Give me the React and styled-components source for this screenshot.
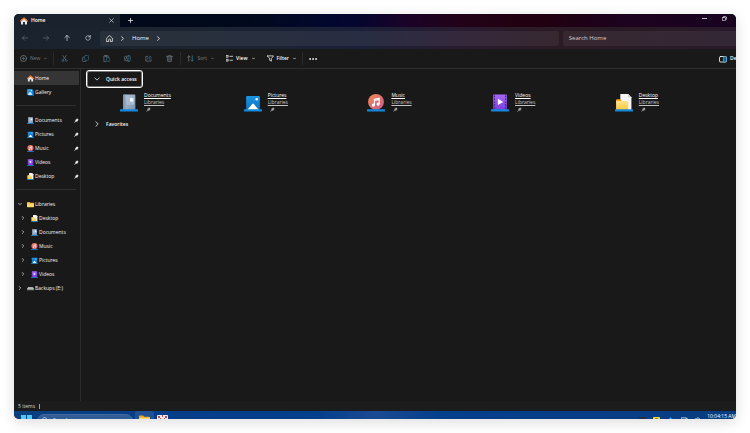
import React, { useState } from 'react';
import styled, { createGlobalStyle } from 'styled-components';

const GlobalStyle = createGlobalStyle`
  * {
    box-sizing: border-box;
  }

  body {
    margin: 0;
    background: #fff;
    font-family: "Open Sans", "Noto Sans", sans-serif;
    font-size: 5px;
    line-height: 7px;
    color: #f4f4f4;
  }

  button, input {
    font: inherit;
    color: inherit;
    background: none;
    border: none;
    margin: 0;
    padding: 0;
  }

  a {
    color: inherit;
    text-decoration: none;
  }

  svg {
    display: block;
    flex: none;
  }
`;

const Page = styled.div`
  min-height: 100vh;
  padding: 14px;
  display: flex;
`;

const Window = styled.div`
  flex: 1;
  min-width: 0;
  display: flex;
  flex-direction: column;
  overflow: hidden;
  border-radius: 5px;
  background: #191919;
  box-shadow: 0 3px 14px rgba(0, 0, 0, 0.14);
`;

const TitleBar = styled.header`
  height: 13px;
  display: flex;
  align-items: center;
  background: linear-gradient(90deg, #01091a 14%, #010a1c 32%, #02072f 44%, #05052e 48%, #1a0328 54%, #220218 62%, #21000f 72%, #1c0320 86%, #18021f 100%);
`;

const Tab = styled.div`
  width: 106px;
  height: 13px;
  padding: 0 6px;
  display: flex;
  align-items: center;
  gap: 3px;
  background: #1a232d;
  font-weight: 600;
  color: #fff;
`;

const TabLabel = styled.span`
  flex: 1;
`;

const IconButton = styled.button`
  width: ${props => props.$width || 20}px;
  height: 12px;
  display: flex;
  align-items: center;
  justify-content: center;
  color: ${props => (props.$dim ? '#6a737b' : '#e6e9ec')};
`;

const WindowControls = styled.div`
  margin-left: auto;
  padding-right: 2px;
  height: 9px;
  align-self: flex-start;
  display: flex;
  align-items: center;
`;

const AddressRow = styled.div`
  height: 22px;
  display: flex;
  align-items: center;
  background: linear-gradient(90deg, #1a232d 0%, #1b2430 25%, #1b2038 48%, #291b30 62%, #2b1b24 75%, #281a2a 100%);
`;

const NavButtons = styled.nav`
  display: flex;
  padding: 0 2px 0 0;
`;

const AddressBar = styled.div`
  flex: 1;
  height: 15px;
  padding: 0 6px;
  display: flex;
  align-items: center;
  gap: 7px;
  border-radius: 2px;
  background: rgba(255, 255, 255, 0.06);
  font-size: 6px;
  line-height: 8px;
  color: #f8f8f8;
`;

const SearchBox = styled.input`
  width: 24%;
  height: 15px;
  margin-left: 4px;
  padding: 0 6px;
  border-radius: 2px 0 0 2px;
  background: rgba(255, 255, 255, 0.06);
  font-size: 6px;
  line-height: 8px;
  outline: none;

  &::placeholder {
    color: #d6d0d6;
    opacity: 1;
  }
`;

const CommandBar = styled.div`
  height: 20px;
  display: flex;
  align-items: center;
  border-bottom: 1px solid #2d2d2d;
`;

const Command = styled.button`
  height: 14px;
  padding: 0 6px;
  display: flex;
  align-items: center;
  gap: 3px;
  font-weight: ${props => (props.$dim ? 400 : 600)};
  color: ${props => (props.$dim ? '#7c7c7c' : '#f8f8f8')};

  svg + span {
    margin-right: 1px;
  }
`;

const DetailsCommand = styled(Command)`
  flex: 0 0 17px;
  margin-left: auto;
  padding: 0;
  overflow: hidden;
`;

const Separator = styled.span`
  width: 1px;
  height: 13px;
  background: #2a2a2a;
`;

const Body = styled.div`
  flex: 1;
  display: flex;
`;

const Sidebar = styled.nav`
  width: 67px;
  padding-top: 2px;
  border-right: 1px solid #2b2b2b;
`;

const SideItem = styled.a`
  height: 14px;
  padding-left: ${props => (props.$nested ? 7 : 4)}px;
  margin-right: 1px;
  display: flex;
  align-items: center;
  background: ${props => (props.$active ? '#353535' : 'transparent')};
`;

const Caret = styled.span`
  width: ${props => (props.$nested ? 10 : 9)}px;
  color: #f0f0f0;
`;

const SideLabel = styled.span`
  flex: 1;
  padding-left: 1px;
  white-space: nowrap;
`;

const SideDivider = styled.hr`
  height: 1px;
  margin: 6px 4px 7px 2px;
  border: none;
  background: #303030;
`;

const Content = styled.main`
  flex: 1;
  padding: 1px 0 0 5px;
`;

const GroupHeader = styled.button`
  height: 18px;
  padding: 0 5px 0 7px;
  display: flex;
  align-items: center;
  gap: 6px;
  border: 1px solid ${props => (props.$focused ? '#fff' : 'transparent')};
  box-shadow: inset 0 0 0 1px ${props => (props.$focused ? '#777' : 'transparent')};
  border-radius: 3px;
  font-weight: 600;
  color: #f8f8f8;
`;

const TileGrid = styled.div`
  display: grid;
  grid-template-columns: repeat(4, 1fr) auto;
  padding: 4px 77px 2px 34px;
`;

const Tile = styled.a`
  display: flex;
  align-items: center;
  gap: 6px;
`;

const TileText = styled.span`
  display: flex;
  flex-direction: column;
`;

const TileName = styled.span`
  text-decoration: underline;
  color: #fff;
`;

const TilePlace = styled.span`
  text-decoration: underline;
  color: #c4c4c4;
`;

const TilePin = styled.span`
  padding: 1px 0 1px 2px;
  color: #a8a8a8;
`;

const StatusBar = styled.footer`
  height: 10px;
  padding: 0 4px;
  display: flex;
  align-items: center;
  gap: 4px;
  background: #1c1c1c;
  color: #d8d8d8;
`;

const StatusMark = styled.span`
  width: 1px;
  height: 5px;
  background: #a0a0a0;
`;

const Taskbar = styled.div`
  height: 8px;
  padding-left: 7px;
  display: flex;
  align-items: flex-start;
  overflow: hidden;
  background: linear-gradient(90deg, #0b3f80 0%, #053d88 20%, #043f8c 42%, #1a4a92 50%, #043f8c 59%, #063d86 80%, #083c80 100%);
`;

const TaskButton = styled.button`
  padding: ${props => (props.$active ? '3px 4px 0' : '4px 0 0')};
  margin-right: ${props => (props.$active ? 3 : 5)}px;
  border-radius: 2px;
  background: ${props => (props.$active ? 'rgba(255, 255, 255, 0.1)' : 'none')};
`;

const TaskSearch = styled.button`
  width: 96px;
  height: 14px;
  margin: 3px 2px 0 0;
  padding: 2px 4px;
  display: flex;
  gap: 5px;
  border-radius: 7px;
  background: #315d96;
  border: 1px solid #416a9f;
  color: #e8eef6;
`;

const Tray = styled.div`
  margin-left: auto;
  display: flex;
  gap: 7px;
  padding-top: 6px;
`;

const Clock = styled.time`
  padding: 2px 0 0 6px;
  white-space: nowrap;
  color: #fff;
`;

const Glyph = ({ size = 7, children, width = 1, ...rest }) => (
    <svg
        width={size}
        height={size}
        viewBox="0 0 16 16"
        fill="none"
        stroke="currentColor"
        strokeWidth={width * 1.7}
        strokeLinecap="round"
        strokeLinejoin="round"
        aria-hidden="true"
        {...rest}
    >
        {children}
    </svg>
);

const ChevronDown = ({ size = 5, width = 1.5 }) => <Glyph size={size} width={width}><path d="M2 5l6 6 6-6" /></Glyph>;
const ChevronRight = ({ size = 5, width = 1.5 }) => <Glyph size={size} width={width}><path d="M5 2l6 6-6 6" /></Glyph>;
const SmallChevron = () => <Glyph size={3} width={2}><path d="M2 5l6 6 6-6" /></Glyph>;

const Pin = ({ size = 5 }) => (
    <svg width={size} height={size} viewBox="0 0 16 16" aria-hidden="true">
        <path d="M9.5 1l5.5 5.5-2 1-2.5 2.5-.5 3.5-3-3L2 15.500.5 14l5-5-3-3L6 5.500 8.500 3z" fill="currentColor" />
    </svg>
);

const HomeIcon = ({ size = 7 }) => (
    <svg width={size} height={size} viewBox="0 0 16 16" aria-hidden="true">
        <path d="M2 6L8 2l6 4v9H9.800v-5H6.200v5H2z" fill="#e3e6ea" />
        <path d="M1.500 8L8 2l6.500 6" fill="none" stroke="#f0752b" strokeWidth="2.600" strokeLinecap="round" strokeLinejoin="round" />
    </svg>
);

const GalleryIcon = ({ size = 7 }) => (
    <svg width={size} height={size} viewBox="0 0 16 16" aria-hidden="true">
        <rect x="3" y="3" width="13" height="13" rx="2" fill="#0b62ac" />
        <rect width="13" height="13" rx="2" fill="#2196e8" />
        <path d="M1 13l6-7 6 7z" fill="#e8f6ff" />
        <circle cx="10" cy="3.500" r="1.400" fill="#fff" />
    </svg>
);

const DriveIcon = () => (
    <svg width={7} height={7} viewBox="0 0 16 16" aria-hidden="true">
        <path d="M2.500 5h11L16 9H0z" fill="#e2e2e2" />
        <rect y="8" width="16" height="4" rx="1" fill="#8b8f93" />
        <rect x="11" y="9" width="3" height="1.500" fill="#4fdc7a" />
    </svg>
);

const FolderIcon = ({ size = 7 }) => (
    <svg width={size} height={size} viewBox="0 0 16 16" aria-hidden="true">
        <path d="M0 3q0-1 1-1h5l2 2h7q1 0 1 1v3H0z" fill="#e9a520" />
        <rect y="5" width="16" height="9" rx="1" fill="#ffd666" />
    </svg>
);

const artwork = {
    Documents: (
        <>
            <rect x="6" y="1" width="23" height="29" rx="2" fill="url(#docFill)" />
            <path d="M6 3q0-2 2-2h2v29H6z" fill="#8299b4" />
            <rect x="13" y="7" width="13" height="13" rx="1" fill="#b4c7da" />
            <rect x="19" y="8" width="6" height="6" fill="#f8fbff" />
            <path d="M14 10h4M14 13h4M14 17h9" stroke="#8fa6c0" strokeWidth="1.400" />
        </>
    ),
    Pictures: (
        <>
            <rect x="4" y="4" width="26" height="26" rx="2" fill="url(#picFill)" />
            <path d="M6 30L15.500 19q1.500-2 3 0L28 30z" fill="#fff" />
            <circle cx="24" cy="10" r="2.400" fill="#e8f7ff" />
        </>
    ),
    Music: (
        <>
            <circle cx="17" cy="15" r="15" fill="url(#musicFill)" />
            <path d="M14 21V10l9-2v11" fill="none" stroke="#fff" strokeWidth="2.200" />
            <path d="M14 12l9-2" stroke="#fff" strokeWidth="2.400" />
            <circle cx="12" cy="21" r="3" fill="#fff" />
            <circle cx="21" cy="19" r="3" fill="#fff" />
        </>
    ),
    Videos: (
        <>
            <rect x="4" y="1" width="26" height="29" rx="2" fill="url(#videoFill)" />
            <path d="M6.500 3v26M27.500 3v26" stroke="#4c249c" strokeWidth="2.600" strokeDasharray="3 2.500" />
            <path d="M13 9v12l10-6z" fill="#fff" />
        </>
    ),
    Desktop: (
        <>
            <path d="M10 0h15l6 6v24H10z" fill="#f5f5f5" />
            <path d="M25 0l6 6h-6z" fill="#c6c6c6" />
            <path d="M2 12q0-2 2-2h7l2 3v4H2z" fill="#f0a81e" />
            <rect x="2" y="13" width="23" height="17" rx="1" fill="url(#folderFill)" />
        </>
    ),
};

const LibraryIcon = ({ name, size = 7 }) => (
    <svg width={size} height={size} viewBox="0 0 34 34" aria-hidden="true">
        {artwork[name]}
        <rect x="0" y="29" width="34" height="4" rx="1" fill="#1389dc" />
    </svg>
);

const Gradients = () => (
    <svg width="0" height="0" aria-hidden="true">
        <defs>
            <linearGradient id="docFill" x2="1" y2="1">
                <stop stopColor="#b7c7d9" />
                <stop offset="1" stopColor="#7c93b0" />
            </linearGradient>
            <linearGradient id="picFill" x2="0" y2="1">
                <stop stopColor="#1b94e0" />
                <stop offset="1" stopColor="#0b74c4" />
            </linearGradient>
            <linearGradient id="musicFill" x2="1" y2="1">
                <stop stopColor="#f5884f" />
                <stop offset="1" stopColor="#c75a92" />
            </linearGradient>
            <linearGradient id="videoFill" x2="0" y2="1">
                <stop stopColor="#a869f2" />
                <stop offset="1" stopColor="#7c3fdd" />
            </linearGradient>
            <linearGradient id="folderFill" x2="0" y2="1">
                <stop stopColor="#ffe28a" />
                <stop offset="1" stopColor="#fbc93f" />
            </linearGradient>
        </defs>
    </svg>
);

const tools = [
    {
        name: 'Cut',
        icon: (
            <>
                <path d="M4 1l7 10M12 1L5 11" />
                <g stroke="#2f627c"><circle cx="4" cy="13" r="2.200" /><circle cx="12" cy="13" r="2.200" /></g>
            </>
        ),
    },
    {
        name: 'Copy',
        icon: (
            <>
                <path d="M5 5H3q-2 0-2 2v6q0 2 2 2h5q2 0 2-2" />
                <rect x="6" y="1" width="9" height="11" rx="2" stroke="#2f627c" />
            </>
        ),
    },
    {
        name: 'Paste',
        icon: (
            <>
                <path d="M6 15H2V2h10v3M5 1h4v2H5z" />
                <rect x="8" y="6" width="7" height="9" rx="1" stroke="#2f627c" />
            </>
        ),
    },
    {
        name: 'Rename',
        icon: (
            <>
                <path d="M9 3H3Q1 3 1 5v6q0 2 2 2h6M4 10l2-5 2 5" />
                <path d="M9 1h4M11 1v14M9 15h4M13 3q2 0 2 2v6q0 2-2 2" stroke="#2f627c" />
            </>
        ),
    },
    {
        name: 'Share',
        icon: (
            <>
                <path d="M6 3H2v11h12v-3" />
                <path d="M5 10q1-5 6-5V2l4 4-4 4V7" stroke="#2f627c" />
            </>
        ),
    },
    {
        name: 'Delete',
        icon: <path d="M1 3h14M6 3V1h4v2M3 3l1 12h8l1-12M6.500 6v6M9.500 6v6" />,
    },
];

const pinned = ['Documents', 'Pictures', 'Music', 'Videos', 'Desktop'];
const libraries = ['Desktop', 'Documents', 'Music', 'Pictures', 'Videos'];

const App = () => {
    const [open, setOpen] = useState(true);

    return (
        <Page>
            <GlobalStyle />
            <Gradients />
            <Window>
                <TitleBar>
                    <Tab>
                        <HomeIcon size={8} />
                        <TabLabel>Home</TabLabel>
                        <button aria-label="Close tab"><Glyph size={5}><path d="M2 2l12 12M14 2L2 14" /></Glyph></button>
                    </Tab>
                    <IconButton aria-label="New tab"><Glyph size={5} width={1.5}><path d="M8 1v14M1 8h14" /></Glyph></IconButton>
                    <WindowControls>
                        <IconButton aria-label="Minimize"><Glyph size={5} width={1.5}><path d="M1 8h14" /></Glyph></IconButton>
                        <IconButton aria-label="Restore">
                            <Glyph size={5} width={1.4}><rect x="1" y="5" width="10" height="10" rx="2" /><path d="M5 2h6q4 0 4 4v5" /></Glyph>
                        </IconButton>
                    </WindowControls>
                </TitleBar>

                <AddressRow>
                    <NavButtons>
                        <IconButton $dim $width={21} aria-label="Back"><Glyph size={6}><path d="M15 8H1M7 2L1 8l6 6" /></Glyph></IconButton>
                        <IconButton $dim $width={21} aria-label="Forward"><Glyph size={6}><path d="M1 8h14M9 2l6 6-6 6" /></Glyph></IconButton>
                        <IconButton $width={21} aria-label="Up"><Glyph size={6}><path d="M8 15V1M2 7l6-6 6 6" /></Glyph></IconButton>
                        <IconButton $width={21} aria-label="Refresh"><Glyph size={6}><path d="M14 8a6 6 0 1 1-2-4.500L14 5M14 1v4h-4" /></Glyph></IconButton>
                    </NavButtons>
                    <AddressBar>
                        <Glyph size={7}><path d="M1.500 7L8 1l6.500 6v8H10v-5q-2-2-4 0v5H1.500z" /></Glyph>
                        <ChevronRight />
                        <span>Home</span>
                        <ChevronRight />
                    </AddressBar>
                    <SearchBox aria-label="Search Home" placeholder="Search Home" />
                </AddressRow>

                <CommandBar>
                    <Command $dim>
                        <Glyph><circle cx="8" cy="8" r="7" /><path d="M8 5v6M5 8h6" stroke="#2f7ba0" /></Glyph>
                        <span>New</span>
                        <SmallChevron />
                    </Command>
                    <Separator />
                    {tools.map((tool) => (
                        <IconButton key={tool.name} $dim $width={21} aria-label={tool.name}>
                            <Glyph>{tool.icon}</Glyph>
                        </IconButton>
                    ))}
                    <Separator />
                    <Command $dim>
                        <Glyph><path d="M4 14V2M1 5l3-3 3 3" /><path d="M12 2v12M9 11l3 3 3-3" stroke="#2f7ba0" /></Glyph>
                        <span>Sort</span>
                        <SmallChevron />
                    </Command>
                    <Command>
                        <Glyph><rect x="1" y="1" width="4" height="4" /><rect x="1" y="10" width="4" height="4" /><path d="M9 3h6M9 12h6" /></Glyph>
                        <span>View</span>
                        <SmallChevron />
                    </Command>
                    <Command>
                        <Glyph><path d="M1 2h14l-5 6v6l-4-2V8z" /></Glyph>
                        <span>Filter</span>
                        <SmallChevron />
                    </Command>
                    <Separator />
                    <IconButton $width={21} aria-label="See more">
                        <Glyph size={8} fill="currentColor"><circle cx="2" cy="8" r="1" /><circle cx="8" cy="8" r="1" /><circle cx="14" cy="8" r="1" /></Glyph>
                    </IconButton>
                    <DetailsCommand>
                        <Glyph size={8}><rect x="1" y="3" width="14" height="11" rx="2" /><path d="M10 3h3q2 0 2 2v7q0 2-2 2h-3z" fill="#215f80" stroke="#4ba9d6" /></Glyph>
                        <span>Details</span>
                    </DetailsCommand>
                </CommandBar>

                <Body>
                    <Sidebar>
                        <SideItem href="#home" $active><Caret /><HomeIcon /><SideLabel>Home</SideLabel></SideItem>
                        <SideItem href="#gallery"><Caret /><GalleryIcon /><SideLabel>Gallery</SideLabel></SideItem>
                        <SideDivider />
                        {pinned.map((name) => (
                            <SideItem key={name} href={`#${name}`}>
                                <Caret />
                                <LibraryIcon name={name} />
                                <SideLabel>{name}</SideLabel>
                                <Pin />
                            </SideItem>
                        ))}
                        <SideDivider />
                        <SideItem href="#libraries"><Caret><ChevronDown size={4} /></Caret><FolderIcon /><SideLabel>Libraries</SideLabel></SideItem>
                        {libraries.map((name) => (
                            <SideItem key={name} href={`#${name}`} $nested>
                                <Caret $nested><ChevronRight size={4} /></Caret>
                                <LibraryIcon name={name} />
                                <SideLabel>{name}</SideLabel>
                            </SideItem>
                        ))}
                        <SideItem href="#backups"><Caret><ChevronRight size={4} /></Caret><DriveIcon /><SideLabel>Backups (E:)</SideLabel></SideItem>
                    </Sidebar>

                    <Content>
                        <GroupHeader $focused aria-expanded={open} onClick={() => setOpen(!open)}>
                            {open ? <ChevronDown size={6} width={1.2} /> : <ChevronRight size={6} width={1.2} />}
                            Quick access
                        </GroupHeader>
                        {open && (
                            <TileGrid>
                                {pinned.map((name) => (
                                    <Tile key={name} href={`#${name}`}>
                                        <LibraryIcon name={name} size={18} />
                                        <TileText>
                                            <TileName>{name}</TileName>
                                            <TilePlace>Libraries</TilePlace>
                                            <TilePin><Pin /></TilePin>
                                        </TileText>
                                    </Tile>
                                ))}
                            </TileGrid>
                        )}
                        <GroupHeader aria-expanded={false}>
                            <ChevronRight size={6} width={1.2} />
                            Favorites
                        </GroupHeader>
                    </Content>
                </Body>

                <StatusBar>
                    5 items
                    <StatusMark />
                </StatusBar>

                <Taskbar>
                    <TaskButton aria-label="Start">
                        <svg width="11" height="11" viewBox="0 0 11 11">
                            <path d="M0 0h5v5H0zM6 0h5v5H6zM0 6h5v5H0zM6 6h5v5H6z" fill="#4cc8f5" />
                        </svg>
                    </TaskButton>
                    <TaskSearch>
                        <Glyph size={6}><circle cx="7" cy="7" r="5.500" /><path d="M11 11l4 4" /></Glyph>
                        Search
                    </TaskSearch>
                    <TaskButton $active aria-label="File Explorer"><FolderIcon size={11} /></TaskButton>
                    <TaskButton aria-label="Calendar">
                        <svg width="11" height="11" viewBox="0 0 11 11">
                            <rect width="11" height="11" rx="1" fill="#eee" />
                            <path d="M1 1h2v2H1zM5 0h1v2H5zM8 1h2v2H8zM3 3h1v1H3zM7 3h1v1H7z" fill="#c54558" />
                        </svg>
                    </TaskButton>
                    <Tray>
                        <svg width="7" height="6" viewBox="0 0 7 6"><rect width="7" height="6" fill="#26303d" /></svg>
                        <svg width="7" height="6" viewBox="0 0 7 6"><rect width="7" height="6" rx="1" fill="#f5df2e" /><path d="M2 2h3" stroke="#444" /></svg>
                        <svg width="7" height="6" viewBox="0 0 7 6"><path d="M3.500 0L6 3H1z" fill="#2a9df4" /></svg>
                        <Glyph size={7}><rect x="1" y="2" width="11" height="9" /><path d="M12 4h3v9" /></Glyph>
                        <Glyph size={6}><path d="M1 5h3l4-4v14l-4-4H1zM12 4q3 4 0 8" /></Glyph>
                    </Tray>
                    <Clock>10:04:15 AM</Clock>
                </Taskbar>
            </Window>
        </Page>
    );
};

export default App;
